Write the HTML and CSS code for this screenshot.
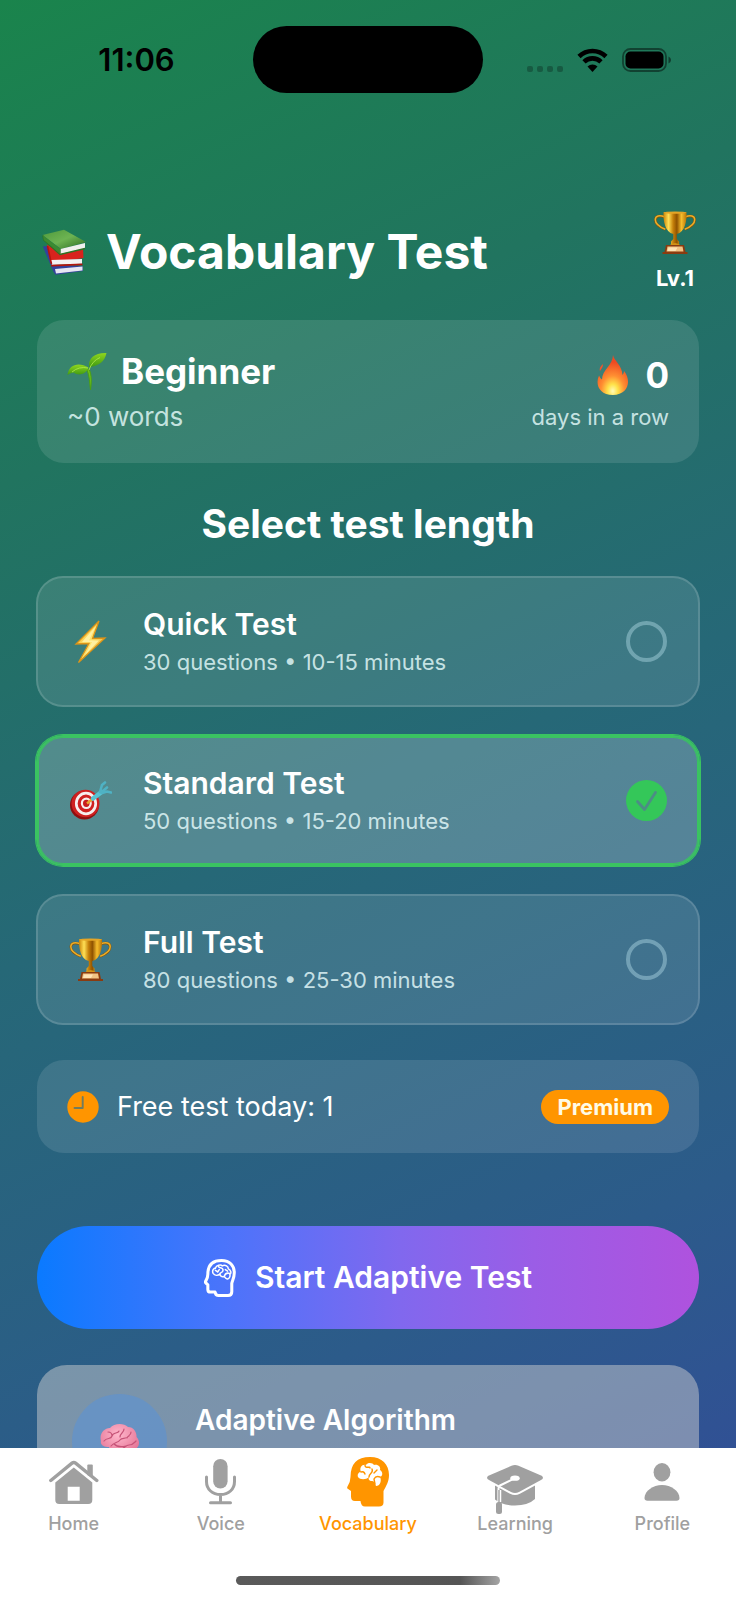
FILE: index.html
```html
<!DOCTYPE html>
<html lang="en">
<head>
<meta charset="utf-8">
<meta name="viewport" content="width=device-width, initial-scale=1">
<title>Vocabulary Test</title>
<link rel="stylesheet" href="styles.css">
</head>
<body>
<svg class="defs" aria-hidden="true">
  <defs>
    <linearGradient id="gold" x1="0" x2="1" y1="0" y2="0">
      <stop offset="0" stop-color="#c98408"/><stop offset=".22" stop-color="#ffdf55"/><stop offset=".42" stop-color="#c47f0a"/>
      <stop offset=".58" stop-color="#8f5200"/><stop offset=".78" stop-color="#f6bd2c"/><stop offset="1" stop-color="#b87406"/>
    </linearGradient>
    <linearGradient id="leaf" x1="0" x2="0" y1="0" y2="1">
      <stop offset="0" stop-color="#8fd61e"/><stop offset="1" stop-color="#3f9a12"/>
    </linearGradient>
    <linearGradient id="cover" x1="0" x2="1" y1="0" y2="1">
      <stop offset="0" stop-color="#4f9a3c"/><stop offset=".5" stop-color="#6db352"/><stop offset="1" stop-color="#2c6b22"/>
    </linearGradient>
    <linearGradient id="bolt" x1="0" x2="1" y1="0" y2="1">
      <stop offset="0" stop-color="#f2a81c"/><stop offset=".5" stop-color="#ffe773"/><stop offset="1" stop-color="#e08a10"/>
    </linearGradient>
    <radialGradient id="flame" cx=".5" cy=".9" r=".85">
      <stop offset="0" stop-color="#fffbb8"/><stop offset=".2" stop-color="#ffe24a"/><stop offset=".45" stop-color="#ff8f32"/><stop offset=".85" stop-color="#ee4a22"/>
    </radialGradient>
    <radialGradient id="cortex" cx=".45" cy=".3" r=".75">
      <stop offset="0" stop-color="#ffb6cb"/><stop offset="1" stop-color="#e0698d"/>
    </radialGradient>
    <symbol id="trophy" viewBox="0 0 42 43">
      <path d="M10.500 6C5.500 4 1.300 5 1.300 9c0 5 5 7.500 10 9.500M31.500 6c5-2 9.200-1 9.200 3 0 5-5 7.500-10 9.500" fill="none" stroke="#8d5200" stroke-width="2.400"/>
      <path d="M10.500 5.700C5.500 3.700 1.300 4.700 1.300 8.700c0 5 5 7.500 10 9.500M31.500 5.700c5-2 9.200-1 9.200 3 0 5-5 7.500-10 9.500" fill="none" stroke="#e9ae2a" stroke-width="1.500"/>
      <path d="M9.500 1.200h23c.4 9-1.500 19.800-9.700 21.800v5l2.300 2.500v4H17v-4l2.300-2.500v-5C11 21 9.200 10.200 9.500 1.200z" fill="url(#gold)"/>
      <ellipse cx="21" cy="1.600" rx="11.500" ry="1.200" fill="#e4a526"/>
      <path d="M15 34.500q6-5 12 0z" fill="#d29216"/>
      <path d="M12 34h18l1.500 7h2v2h-25v-2h2z" fill="#8a3b10"/>
      <path d="M13.500 35.500h15l1 5h-17z" fill="#f2c384"/>
      <path d="M14.500 36.500h9l-2 3.500h-8z" fill="#ffe3b5"/>
    </symbol>
  </defs>
</svg>
<div class="app">
  <div class="screen">
    <div class="status">
      <span class="status-time">11:06</span>
      <span class="island"></span>
      <span class="status-icons">
        <span class="cell"><i></i><i></i><i></i><i></i></span>
        <svg class="wifi" viewBox="0 0 31 24" aria-hidden="true">
          <path d="M2 8.500a19.500 19.500 0 0 1 27 0M7 13.800a12.300 12.300 0 0 1 17 0" fill="none" stroke="#000" stroke-width="4.600"/>
          <path d="M10.500 18.600a7.300 7.300 0 0 1 10 0L15.500 24z"/>
        </svg>
        <svg class="battery" viewBox="0 0 50 24" aria-hidden="true">
          <rect x="1" y="1" width="43" height="22" rx="7.500" fill="none" stroke="#000" stroke-opacity=".45" stroke-width="1.800"/>
          <rect x="3.500" y="3.500" width="38" height="17" rx="5"/>
          <path d="M46.500 8.500q2.500 1 2.500 3.500t-2.500 3.500z" fill-opacity=".5"/>
        </svg>
      </span>
    </div>

    <header class="header">
      <svg class="books" viewBox="0 0 45 46" aria-hidden="true">
        <path d="M.8 17.500l4.500-.5L11 36l29.500 1 .5 5-27.500 3.700L11.500 43z" fill="#33419b"/>
        <path d="M13 40l27.500-2.500v4L14 44.500z" fill="#e6e6f2"/>
        <path d="M5 15.500L19 24l22-4.500.5 9.500L9 34z" fill="#d8231d"/>
        <path d="M8.500 31l31.500-1v4.800L10 36z" fill="#f3f1f3"/>
        <path d="M9 36.600l31.500-1.200M5.500 17l4 18" fill="none" stroke="#b3150f" stroke-width="1.600"/>
        <path d="M.5 6L22 .8 44 13 19 20z" fill="url(#cover)"/>
        <path d="M18.500 20L43 14v5.500L18.500 25z" fill="#f0f0ee"/>
        <path d="M1 6.500l.7 4.500L18 25.500l25-6" fill="none" stroke="#2c7424" stroke-width="1.400"/>
        <path d="M1 6.500L18.500 20v5L1.700 11z" fill="#3c8a31"/>
      </svg>
      <h1 class="title">Vocabulary Test</h1>
      <div class="level">
        <svg class="trophy" aria-hidden="true"><use href="#trophy"/></svg>
        <span>Lv.1</span>
      </div>
    </header>

    <section class="panel progress">
      <div class="progress-col">
        <div class="progress-main">
          <svg class="seedling" viewBox="0 0 40 39" aria-hidden="true">
            <path d="M22 17c3 6 2.500 14 1.500 21-1-8-1-14-3.500-20z" fill="#6cc01c" stroke="#4ca013"/>
            <path d="M.5 23C2 12 12 10 21.500 15.500 19 23 11 24 6.500 20.500 4 21 2 22 .5 23z" fill="url(#leaf)"/>
            <path d="M22 15C21 6 28 .5 39.500 1 38 9 32 14 22.500 15z" fill="url(#leaf)"/>
            <path d="M22 18q3-9 11-12.500M21 16Q12 14 5 20" fill="none" stroke="#a8e64a" stroke-width=".9"/>
          </svg>
          <span>Beginner</span>
        </div>
        <div class="progress-note">~0 words</div>
      </div>
      <div class="progress-col progress-col-end">
        <div class="progress-main streak">
          <svg class="flame" viewBox="0 0 32 40" aria-hidden="true">
            <path d="M16 0c1 6 9 10 9.500 20 1-1 1.500-3 1.500-4 8 10 4 24-11 24C2 40-2 29 2 20.500c1 2 1.500 3 3 4C5 15 16 10 16 0z" fill="url(#flame)"/>
            <path d="M3 16c-1-3 1-5 3-7 0 3-1 4-3 7z" fill="#f0522d"/>
          </svg>
          <span>0</span>
        </div>
        <div class="progress-note small">days in a row</div>
      </div>
    </section>

    <h2 class="section-title" id="length-title">Select test length</h2>

    <div class="options" role="radiogroup" aria-labelledby="length-title">
      <label class="option">
        <svg class="emoji" viewBox="0 0 43 43" aria-hidden="true">
          <path d="M30 1L7 24l13-.5L9.500 42.500 36 18l-12.500.5z" fill="url(#bolt)" stroke="#dc9418" stroke-width="1.300"/>
          <path d="M27 6L13 22h10l-7 13 14-14.500H20z" fill="#fff0a0"/>
        </svg>
        <span class="option-text"><span class="option-name">Quick Test</span><span class="option-info">30 questions • 10-15 minutes</span></span>
        <input class="radio" type="radio" name="length">
      </label>
      <label class="option">
        <svg class="emoji" viewBox="0 -3 43 43" aria-hidden="true">
          <ellipse cx="15.500" cy="23" rx="14.500" ry="14.500" fill="#8e0f10"/>
          <ellipse cx="16.500" cy="21.500" rx="14" ry="13.800" fill="#cf2020"/>
          <ellipse cx="17" cy="21.500" rx="9.700" ry="10.300" fill="none" stroke="#f7eeee" stroke-width="2.700"/>
          <ellipse cx="17.300" cy="21.300" rx="4.400" ry="4.700" fill="#c81c1c" stroke="#f7eeee" stroke-width="2.200"/>
          <path d="M18 21.500l6-5" stroke="#e8a32c" stroke-width="2.400"/>
          <path d="M24 16.500l8-6" stroke="#58c3d2" stroke-width="4.500" stroke-linecap="round"/>
          <path d="M31 10l2-7 3-2.500M32 10.500l6-5M33 11l5-1.500 4 1" fill="none" stroke="#4fb2c4" stroke-width="2.600" stroke-linecap="round"/>
        </svg>
        <span class="option-text"><span class="option-name">Standard Test</span><span class="option-info">50 questions • 15-20 minutes</span></span>
        <input class="radio" type="radio" name="length" checked>
      </label>
      <label class="option">
        <svg class="emoji" aria-hidden="true"><use href="#trophy"/></svg>
        <span class="option-text"><span class="option-name">Full Test</span><span class="option-info">80 questions • 25-30 minutes</span></span>
        <input class="radio" type="radio" name="length">
      </label>
    </div>

    <div class="panel quota">
      <svg class="clock" viewBox="0 0 32 32" aria-hidden="true">
        <circle cx="16" cy="16" r="15.700" fill="#ff9500"/>
        <path d="M15.700 6v11H7.500" fill="none" stroke="#6f7c60" stroke-width="1.900" stroke-linecap="round" stroke-linejoin="round"/>
      </svg>
      <span class="quota-text">Free test today: 1</span>
      <span class="badge">Premium</span>
    </div>

    <button class="start" type="button">
      <svg class="start-icon" viewBox="0 0 42 50" aria-hidden="true">
        <path d="M23 2C34 2 39.800 9 39.800 18c0 6-2.300 10-3.300 14v11q0 5-5 5H19q-3.500 0-4.500-4.500H8.500Q5 43.500 5 40v-6l-3-3q-.5-1 .5-2.500Q5 24 5 20 5 2 23 2z" fill="none" stroke="#fff" stroke-width="4" stroke-linejoin="round"/>
        <path d="M12 19c-2-4 1-7 3-7 1-4 7-5 9-3 4-2 8 1 8 4 4 2 4 6 2 7 1 4-2 7-4 6-3-1-2-3-4-3-3 1-5-1-5-3-3 2-7 2-9-1z" fill="none" stroke="#fff" stroke-width="2"/>
        <path d="M15 15l3 2 2-3M19 9.500c0 3 6 1 6 5s-4 3-4 5M34 19c-3-1-6 0-7 3M28 14l3 2" fill="none" stroke="#fff" stroke-width="2" stroke-linecap="round"/>
      </svg>
      <span>Start Adaptive Test</span>
    </button>

    <article class="feature">
      <span class="feature-icon">
        <svg class="brain" viewBox="0 0 41 36" aria-hidden="true">
          <path d="M2 17C0 10 5 4 11 4c4-5 14-5 18-1 6 0 9 6 8.500 10C42 17 40 25 35 25c-1 5-5 7-10 6l-3 4-4-1 2-6C14 29 11 27 10 23 5 23 1 21 2 17z" fill="url(#cortex)"/>
          <path d="M5 17c3-4 7-1 8-5s6-2 7-5M12 22c3-4 7-3 9-6s6 0 9-4M20 25c5 1 6-4 10-4s5-2 7-4M9 8c3 0 4 2 4 4M25 5c0 4-4 4-4 8M32 8c0 4-3 3-4 6M15 20c3 3 8 3 12 2" fill="none" stroke="#c65478" stroke-width="1.200" stroke-linecap="round"/>
        </svg>
      </span>
      <h3 class="feature-title">Adaptive Algorithm</h3>
    </article>
  </div>

  <nav class="tabbar">
    <div class="tabs">
      <a class="tab" href="#home">
        <span class="tab-icon"><svg width="50" height="44" viewBox="0 0 50 44" aria-hidden="true">
          <path d="M38.300 15V5.500q0-1 1-1h3.500q1 0 1 1V18z"/>
          <path d="M1.800 20.500L23 3.200q1.800-1.400 3.600 0L47.800 20.500" fill="none" stroke="currentColor" stroke-width="3.400" stroke-linecap="round"/>
          <path fill-rule="evenodd" d="M24.800 7.500L43.300 22.500V40q0 4-4 4h-29q-4 0-4-4V22.500zM18.700 26.700v14h12v-14z"/>
        </svg></span>
        <span>Home</span>
      </a>
      <a class="tab" href="#voice">
        <span class="tab-icon"><svg width="31" height="46" viewBox="0 0 31 46" aria-hidden="true">
          <rect x="8.200" y="0" width="14.400" height="29.500" rx="7.200"/>
          <path d="M1.500 18v4.500c0 8 6 13 14 13s14-5 14-13V18M15.500 36v7M5.500 43.700h20" fill="none" stroke="currentColor" stroke-width="3" stroke-linecap="round"/>
        </svg></span>
        <span>Voice</span>
      </a>
      <a class="tab tab-active" href="#vocabulary" aria-current="page">
        <span class="tab-icon"><svg width="42" height="50" viewBox="0 0 42 50" aria-hidden="true">
          <path d="M23 0C35 0 42 7.500 42 18c0 7-3 11-5.500 16v11.500q0 4-4.500 4H18q-4 0-4.500-5.500H8q-4 0-4-4.500V34L.8 31.800Q-.3 31 .5 29.500 3.500 24.500 3.500 20 3.500 0 23 0z"/>
          <path d="M11 20c-1-3 1-5 3-5-2-4 1-8 5-7 2-3 7-2 8 0 4-1 7 2 6 5 3 2 3 6 0 7 2 4 0 9-4 9-1-3-2-5-4-5-3 0-4-2-3-4-3 3-9 3-11 0z" fill="#fff"/>
          <path d="M14 15q3-1 4 2M18 8c0 4 5 1 5 3M22 20c0-4 5-4 3-8M33 20c-3-1-5 0-6 2l1 5M30 13l-3 3" fill="none" stroke="currentColor" stroke-width="1.400" stroke-linecap="round"/>
        </svg></span>
        <span>Vocabulary</span>
      </a>
      <a class="tab" href="#learning">
        <span class="tab-icon"><svg width="56" height="57" viewBox="0 -8 56 57" aria-hidden="true">
          <path d="M8 20v14.500Q15 40.500 28 40.500T48 34V20z"/>
          <path d="M2 10.500L24.500.8q3.500-1.500 7 0L54 10.500q4 2 0 4.500L32 27q-4 2-8 0L2 15q-4-2.500 0-4.500z" stroke="#fff" stroke-width="4" paint-order="stroke"/>
          <path d="M28 13.200L13 20.500q-1.500.8-1.500 3V38" fill="none" stroke="#fff" stroke-width="2"/>
          <ellipse cx="28" cy="13.200" rx="4.700" ry="2.600" fill="#fff"/>
          <path d="M12.500 25v12" stroke="#fff" stroke-width="3.500"/>
          <path d="M12 25v13" stroke="currentColor" stroke-width="1.400"/>
          <rect x="9" y="37" width="6" height="12" rx="2.500"/>
        </svg></span>
        <span>Learning</span>
      </a>
      <a class="tab" href="#profile">
        <span class="tab-icon"><svg width="36" height="38" viewBox="0 0 36 38" aria-hidden="true">
          <ellipse cx="18" cy="9.200" rx="8.400" ry="9.200"/>
          <path d="M18 22c9 0 17.500 6 17.500 13 0 2-1 2.700-3 2.700h-29C1.500 37.700.5 37 .5 35 .5 28 9 22 18 22z"/>
        </svg></span>
        <span>Profile</span>
      </a>
    </div>
    <span class="home-indicator"></span>
  </nav>
</div>
</body>
</html>
```
FILE: styles.css
```css
* { box-sizing: border-box; }

body {
  margin: 0;
  font-family: Inter, "Liberation Sans", sans-serif;
  color: #fff;
}

h1, h2, h3 { margin: 0; }
svg { display: block; flex: none; }

.defs { position: absolute; width: 0; height: 0; }

.app {
  display: flex;
  flex-direction: column;
  height: 100vh;
  background: linear-gradient(155deg, #1a844c 0%, #21745f 25%, #266877 50%, #2c5b8a 78%, #334b9a 100%);
}

.screen {
  flex: 1;
  min-height: 0;
  overflow: hidden auto;
  scrollbar-width: none;
  display: flex;
  flex-direction: column;
  padding: 0 37px;
}
.screen > * { flex: none; }

/* Status bar */
.status {
  display: grid;
  grid-template-columns: 1fr 230px 1fr;
  align-items: center;
  justify-items: center;
  margin: 0 -17px;
  padding-top: 26px;
  color: #000;
}
.status-time { font-size: 31px; font-weight: 600; line-height: 38px; }
.island { width: 100%; height: 67px; border-radius: 34px; background: #000; }
.status-icons { display: flex; align-items: center; gap: 14px; }
.cell { display: flex; gap: 4px; align-self: flex-end; }
.cell i { width: 6px; height: 6px; border-radius: 2px; background: rgba(0, 0, 0, .25); }
.wifi { width: 31px; height: 24px; }
.battery { width: 50px; height: 24px; }

/* Header */
.header {
  display: flex;
  align-items: center;
  gap: 19px;
  margin-top: 118px;
  padding: 0 3px 0 5px;
}
.books { width: 45px; height: 46px; }
.title { flex: 1; font-size: 48px; font-weight: 700; line-height: 58px; }
.level {
  display: flex;
  flex-direction: column;
  align-items: center;
  gap: 10px;
  font-size: 22px;
  font-weight: 700;
  line-height: 28px;
}
.trophy { width: 42px; height: 43px; }

/* Panels */
.panel {
  display: flex;
  border-radius: 27px;
  background: rgba(255, 255, 255, .11);
}
.progress {
  align-items: flex-end;
  justify-content: space-between;
  margin-top: 28px;
  padding: 29px 30px;
}
.progress-col { display: flex; flex-direction: column; gap: 7px; }
.progress-col-end { align-items: flex-end; gap: 3px; }
.progress-main {
  display: flex;
  align-items: center;
  gap: 14px;
  font-size: 35px;
  font-weight: 700;
  line-height: 44px;
}
.streak { gap: 16px; }
.seedling { width: 40px; height: 39px; }
.flame { width: 32px; height: 40px; }
.progress-note { font-size: 26px; line-height: 34px; color: rgba(235, 255, 255, .8); }
.small { font-size: 22px; }

.section-title {
  margin: 37px 0 28px;
  font-size: 39px;
  font-weight: 700;
  line-height: 48px;
  text-align: center;
}

/* Test length options */
.options { display: flex; flex-direction: column; gap: 28px; margin: 0 -1px; }
.option {
  display: flex;
  align-items: center;
  padding: 28px 31px;
  border: 2px solid rgba(255, 255, 255, .14);
  border-radius: 27px;
  background: rgba(255, 255, 255, .11);
  cursor: pointer;
}
.option:has(.radio:checked) {
  border-color: #3ac361;
  background-color: rgba(255, 255, 255, .21);
  box-shadow: 0 0 0 1px #3ac361, inset 0 0 0 1px #3ac361;
}
.emoji { width: 43px; height: 43px; }
.option-text { flex: 1; display: flex; flex-direction: column; gap: 5px; margin-left: 31px; }
.option-name { font-size: 30px; font-weight: 600; line-height: 37px; }
.option-info { font-size: 22px; line-height: 29px; color: rgba(235, 255, 255, .8); }
.radio {
  appearance: none;
  width: 41px;
  height: 41px;
  margin: 0;
  border: 4px solid rgba(190, 230, 240, .4);
  border-radius: 50%;
}
.radio:checked {
  border: 0;
  background: #34c759 url("data:image/svg+xml,%3Csvg xmlns='http://www.w3.org/2000/svg' viewBox='0 0 41 41'%3E%3Cpath d='M11.500 21.500l7 8L29.500 12.500' fill='none' stroke='%234c8d85' stroke-width='2.800' stroke-linecap='round' stroke-linejoin='round'/%3E%3C/svg%3E") center / contain no-repeat;
}

/* Free test quota */
.quota { align-items: center; margin-top: 35px; padding: 29px 30px; }
.clock { width: 32px; height: 32px; }
.quota-text { flex: 1; margin-left: 18px; font-size: 27px; line-height: 35px; }
.badge {
  padding: 0 16px;
  border-radius: 17px;
  background: #ff9500;
  color: #fffbe6;
  font-size: 22px;
  font-weight: 700;
  line-height: 34px;
}

.start {
  display: flex;
  align-items: center;
  justify-content: center;
  gap: 19px;
  margin-top: 73px;
  padding: 32px;
  border: 0;
  border-radius: 52px;
  background: linear-gradient(90deg, #0a7aff 0%, #4a74fb 28%, #8168ee 55%, #9b5de6 75%, #af52de 100%);
  color: #fff;
  font: 600 30px/39px Inter, "Liberation Sans", sans-serif;
  cursor: pointer;
}
.start-icon { width: 32px; height: 38px; }

.feature {
  display: flex;
  align-items: flex-start;
  gap: 28px;
  margin-top: 36px;
  padding: 29px 35px;
  border-radius: 30px;
  background: rgba(208, 208, 208, .48);
}
.feature-icon {
  display: grid;
  place-items: center;
  width: 95px;
  height: 95px;
  border-radius: 50%;
  background: rgba(90, 145, 215, .55);
}
.brain { width: 41px; height: 36px; }
.feature-title { padding-top: 8px; font-size: 28px; font-weight: 600; line-height: 36px; }

/* Tab bar */
.tabbar {
  flex: none;
  display: flex;
  flex-direction: column;
  align-items: center;
  gap: 40px;
  padding: 9px 0 15px;
  background: #fff;
}
.tabs { display: grid; grid-template-columns: repeat(5, 1fr); width: 100%; }
.tab {
  display: flex;
  flex-direction: column;
  align-items: center;
  gap: 5px;
  color: #a0a0a0;
  font-size: 18px;
  font-weight: 500;
  line-height: 24px;
  text-decoration: none;
}
.tab svg { fill: currentColor; }
.tab-active { color: #ff9500; }
.tab-icon { display: grid; place-items: center; height: 50px; }
.home-indicator {
  width: 36%;
  height: 9px;
  border-radius: 5px;
  background: linear-gradient(90deg, #5a5a5a 0%, #555 85%, #a5a5a5 100%);
}
```
